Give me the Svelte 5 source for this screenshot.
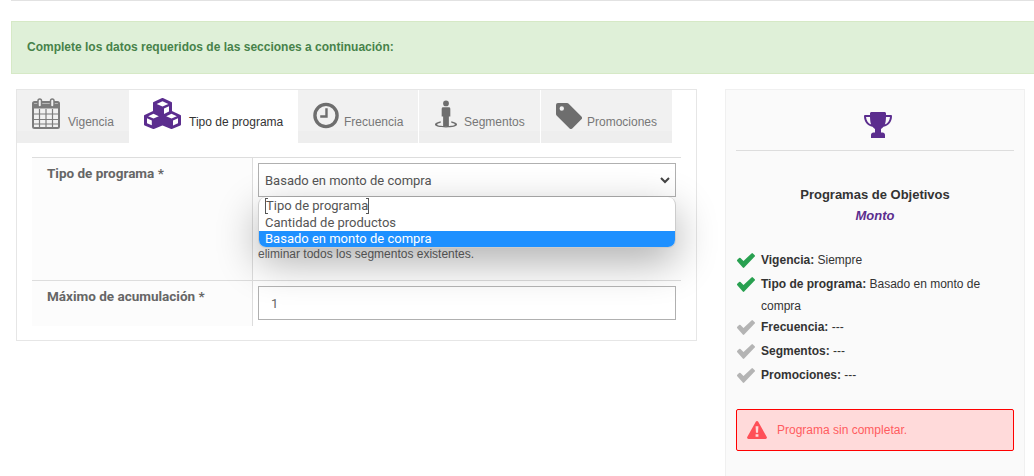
<script>
    const tabs = [
        { id: 'cal', label: 'Vigencia', width: 112, gap: 8 },
        { id: 'cubes', label: 'Tipo de programa', width: 169, gap: 8, active: true },
        { id: 'clock', label: 'Frecuencia', width: 120, gap: 5 },
        { id: 'seg', label: 'Segmentos', width: 121, gap: 6 },
        { id: 'tag', label: 'Promociones', width: 131, gap: 5 }
    ];
    const summary = [
        { label: 'Vigencia:', value: 'Siempre', ok: true },
        { label: 'Tipo de programa:', value: 'Basado en monto de compra', ok: true },
        { label: 'Frecuencia:', value: '---' },
        { label: 'Segmentos:', value: '---' },
        { label: 'Promociones:', value: '---' }
    ];
</script>

<div class="page">
    <div class="rule"></div>
    <div class="alert-top">Complete los datos requeridos de las secciones a continuación:</div>

    <div class="columns">
        <div class="card">
            <div class="tabs">
                {#each tabs as tab}
                    <div class="tab" class:active={tab.active} style="width: {tab.width}px; gap: {tab.gap}px">
                        {#if tab.id == 'cal'}
                            <svg width="28" height="31" viewBox="0 0 28 31" fill="none" stroke="#7c7c7c">
                                <rect x="1" y="4" width="26" height="26" rx="1.500" stroke-width="2"/>
                                <path d="M1 8h26" stroke-width="5"/>
                                <path d="M1 16h26M1 21.500h26M1 26h26M7.500 11v18M14 11v18M20.500 11v18" stroke-width="1.200"/>
                                <rect x="6" y="1" width="3.500" height="8" rx="1.750" fill="#f1f1f1" stroke-width="1.500"/>
                                <rect x="18.500" y="1" width="3.500" height="8" rx="1.750" fill="#f1f1f1" stroke-width="1.500"/>
                            </svg>
                        {:else if tab.id == 'cubes'}
                            <svg width="37" height="31" viewBox="0 0 37 31">
                                <g fill="#5b2d8e" stroke="#5b2d8e" stroke-width="2" stroke-linejoin="round">
                                    <path d="M18.500 1l8.500 4v9.500L18.500 18.500 10 14.500V5z"/>
                                    <path d="M9.500 14l8.500 4v8.500L9.500 30 1 26.500v-8.500z"/>
                                    <path d="M27.500 14l8.500 4v8.500L27.500 30 19 26.500v-8.500z"/>
                                </g>
                                <path d="M18.500 3.200l5.800 2.700-5.800 2.700-5.800-2.700z" fill="#fff"/>
                                <path d="M20 10.500l5-2.300v5.300L20 16z" fill="#fff"/>
                                <path d="M9.500 15.800l5.300 2.400-5.300 2.400-5.300-2.400z" fill="#fff"/>
                                <path d="M3 20.300l4.800 2.200v4.800L3 25.300z" fill="#fff"/>
                                <path d="M27.500 15.800l5.300 2.400-5.300 2.400-5.300-2.400z" fill="#fff"/>
                                <path d="M29 22.500l5-2.200v5L29 27.500z" fill="#fff"/>
                            </svg>
                        {:else if tab.id == 'clock'}
                            <svg width="26" height="27" viewBox="0 0 27 27" fill="none" stroke="#6e6e6e">
                                <circle cx="13.500" cy="13.500" r="11.500" stroke-width="3.500"/>
                                <path d="M14 6v8.500H7.500" stroke-width="2.500"/>
                            </svg>
                        {:else if tab.id == 'seg'}
                            <svg width="24" height="29" viewBox="0 0 25 29" fill="#6e6e6e">
                                <circle cx="12.500" cy="3" r="3"/>
                                <path d="M8 8.500a1.500 1.500 0 0 1 1.500-1.500h6A1.500 1.500 0 0 1 17 8.500v8h-1.500V27h-6V16.500H8z"/>
                                <path d="M7 21.500c-4 .8-6 2-6 3.500 0 2 5 3 11.500 3S24 27 24 25c0-1.500-2-2.700-6-3.500v1.600c2.500.5 3.700 1.200 3.700 1.900 0 1-4 1.700-9.200 1.700s-9.200-.7-9.200-1.700c0-.7 1.200-1.400 3.700-1.900z"/>
                            </svg>
                        {:else}
                            <svg width="26" height="26" viewBox="0 0 27 27" fill="#6e6e6e">
                                <path fill-rule="evenodd" d="M2 0h9.500a2 2 0 0 1 1.400.6l13.500 13.500a2 2 0 0 1 0 2.800l-9.500 9.500a2 2 0 0 1-2.800 0L.6 12.900A2 2 0 0 1 0 11.500V2a2 2 0 0 1 2-2zM6 3.500a2.300 2.300 0 1 0 0 4.600 2.300 2.300 0 0 0 0-4.600z"/>
                            </svg>
                        {/if}
                        <span>{tab.label}</span>
                    </div>
                {/each}
            </div>

            <div class="form">
                <div class="row first">
                    <div class="label">Tipo de programa *</div>
                    <div class="field">
                        <div class="select">
                            Basado en monto de compra
                            <svg class="chevron" width="10" height="7" viewBox="0 0 10 7" fill="none" stroke="#444" stroke-width="2"><path d="M1 1l4 4 4-4"/></svg>
                        </div>
                        <p class="help">eliminar todos los segmentos existentes.</p>
                        <div class="menu">
                            <div class="option"><span class="focused">Tipo de programa</span></div>
                            <div class="option">Cantidad de productos</div>
                            <div class="option selected">Basado en monto de compra</div>
                        </div>
                    </div>
                </div>
                <div class="row">
                    <div class="label">Máximo de acumulación *</div>
                    <div class="field">
                        <div class="input">1</div>
                    </div>
                </div>
            </div>
        </div>

        <aside class="side">
            <div class="trophy">
                <svg width="28" height="26" viewBox="0 0 28 26" fill="#5b2d8e">
                    <path fill-rule="evenodd" d="M6 1.500C6 .7 6.700 0 7.500 0h13c.8 0 1.500.7 1.500 1.500V3h5a1 1 0 0 1 1 1c0 6-3.500 10-8.500 10.800-.8 1-1.700 1.700-2.500 2.200v3.500h1.500c1.500 0 2.500 1 2.500 2.500V26H7v-3c0-1.500 1-2.500 2.500-2.500H11V17c-.8-.5-1.700-1.200-2.500-2.200C3.500 14 0 10 0 4a1 1 0 0 1 1-1h5zM2 5c.3 3.500 2.200 6.500 5.200 7.600C6.500 11 6.100 8.500 6 5zm24 0h-4c-.1 3.500-.5 6-1.200 7.600 3-1.100 4.900-4.100 5.200-7.600z"/>
                </svg>
            </div>
            <h3>Programas de Objetivos</h3>
            <p class="subtitle">Monto</p>
            <ul>
                {#each summary as item}
                    <li>
                        <svg width="18" height="15" viewBox="0 0 18 15" fill={item.ok ? '#28a050' : '#b4b4b4'}>
                            <path d="M.3 8.200a1 1 0 0 1 0-1.400l1.800-1.800a1 1 0 0 1 1.400 0l3 3L14.500.4a1 1 0 0 1 1.400 0l1.800 1.800a1 1 0 0 1 0 1.400L7.200 14.600a1 1 0 0 1-1.400 0z"/>
                        </svg>
                        <div><b>{item.label}</b> {item.value}</div>
                    </li>
                {/each}
            </ul>
            <div class="error">
                <svg width="20" height="18" viewBox="0 0 21 19">
                    <path d="M10.500 0c.6 0 1 .3 1.300.8l9 16c.5 1-.1 2.200-1.300 2.200H1.500C.3 19-.3 17.800.2 16.800l9-16c.3-.5.7-.8 1.300-.8z" fill="#ff5058"/>
                    <path d="M9 5.500h3l-.4 7h-2.200zM9 14h3v2.700H9z" fill="#ffdada"/>
                </svg>
                <span>Programa sin completar.</span>
            </div>
        </aside>
    </div>
</div>

<style>
    :global(body) {
        margin: 0;
        background: #fff;
        overflow: hidden;
    }

    .page {
        height: 476px;
        overflow: hidden;
        font-family: "Liberation Sans", Arial, sans-serif;
    }

    .rule {
        height: 1px;
        margin-left: 11px;
        background: #e2e2e2;
    }

    .alert-top {
        margin: 20px 0 15px 11px;
        height: 53px;
        line-height: 50px;
        box-sizing: border-box;
        padding-left: 15px;
        background: #dff0d8;
        border: 1px solid #d6e9c6;
        border-right: none;
        color: #47824a;
        font-size: 12px;
        font-weight: bold;
    }

    .columns {
        display: flex;
        padding-left: 16px;
    }

    .card {
        width: 681px;
        height: 252px;
        box-sizing: border-box;
        border: 1px solid #e6e6e6;
    }

    .tabs {
        display: flex;
        height: 53px;
    }

    .tab {
        display: flex;
        align-items: flex-end;
        box-sizing: border-box;
        padding: 0 0 14px 15px;
        margin-right: 1px;
        background: linear-gradient(#f1f1f1 41px, #eee 41px);
        color: #777;
        font-size: 12px;
    }

    .tab:nth-child(1), .tab:nth-child(2) {
        margin-right: 0;
    }

    .tab.active {
        background: #fff;
        color: #333;
    }

    .tab span {
        line-height: 14px;
    }

    .form {
        margin: 14px 15px 0;
        border-top: 1px solid #ddd;
    }

    .row {
        display: flex;
        height: 45px;
    }

    .row.first {
        height: 123px;
        border-bottom: 1px solid #ddd;
        box-sizing: border-box;
    }

    .label {
        width: 221px;
        flex: none;
        box-sizing: border-box;
        padding: 7px 0 0 15px;
        background: #fcfcfc;
        border-right: 1px solid #ddd;
        color: #666;
        font-family: Roboto, sans-serif;
        font-size: 13.500px;
        font-weight: bold;
    }

    .field {
        position: relative;
        flex: 1;
        padding: 5px 5px 0 5px;
    }

    .select, .input {
        position: relative;
        box-sizing: border-box;
        height: 34px;
        line-height: 33px;
        border: 1px solid #b0b0b0;
        font-family: Roboto, sans-serif;
        font-size: 13px;
        color: #555;
    }

    .select {
        padding-left: 6px;
        background: #fff;
    }

    .input {
        padding-left: 12px;
        color: #666;
    }

    .chevron {
        position: absolute;
        right: 5px;
        top: 13px;
    }

    .menu {
        position: absolute;
        left: 5px;
        right: 5px;
        top: 39px;
        height: 51px;
        box-sizing: border-box;
        padding-top: 1px;
        background: #fff;
        border: 1px solid #ccc;
        border-top: none;
        border-radius: 8px;
        overflow: hidden;
        box-shadow: 0 14px 42px rgba(0, 0, 0, 0.32);
        font-family: Roboto, sans-serif;
        font-size: 13px;
        color: #555;
    }

    .option {
        height: 16.500px;
        line-height: 16px;
        padding-left: 6px;
    }

    .option.selected {
        background: #1e90ff;
        color: #fff;
    }

    /* the browser's focus ring, clipped to brackets by the list's top edge */
    .focused {
        position: relative;
        display: inline-block;
        padding: 0 1px;
        background:
            linear-gradient(#555, #555) left / 1px 100% no-repeat,
            linear-gradient(#555, #555) right / 1px 100% no-repeat,
            linear-gradient(#555, #555) left top / 3px 1px no-repeat,
            linear-gradient(#555, #555) left bottom / 3px 1px no-repeat,
            linear-gradient(#555, #555) right top / 3px 1px no-repeat,
            linear-gradient(#555, #555) right bottom / 3px 1px no-repeat;
    }

    .help {
        margin: 48px 0 0;
        font-size: 12px;
        line-height: 18px;
        color: #666;
    }

    .side {
        width: 300px;
        margin-left: 28px;
        height: 420px;
        box-sizing: border-box;
        padding: 0 10px;
        background: #fafafa;
        border: 1px solid #f0f0f0;
        color: #333;
    }

    .trophy {
        display: flex;
        justify-content: center;
        height: 61px;
        box-sizing: border-box;
        padding: 22px 0 0 6px;
        border-bottom: 1px solid #ddd;
    }

    h3 {
        margin: 36px 0 0;
        text-align: center;
        font-size: 13px;
        line-height: 16px;
        font-weight: bold;
    }

    .subtitle {
        margin: 5px 0 0;
        text-align: center;
        font-size: 13px;
        line-height: 16px;
        font-style: italic;
        font-weight: bold;
        color: #5b2d8e;
    }

    ul {
        list-style: none;
        margin: 26px 0 0;
        padding: 0 0 0 1px;
    }

    li {
        display: flex;
        gap: 6px;
        min-height: 24px;
        font-size: 12px;
        line-height: 21.500px;
    }

    li svg {
        flex: none;
        margin-top: 3px;
    }

    .error {
        display: flex;
        align-items: center;
        gap: 10px;
        height: 42px;
        margin-top: 20px;
        box-sizing: border-box;
        padding-left: 10px;
        background: #ffdada;
        border: 1px solid #f00;
        border-radius: 2px;
        color: #ff5c60;
        font-size: 12px;
    }
</style>
